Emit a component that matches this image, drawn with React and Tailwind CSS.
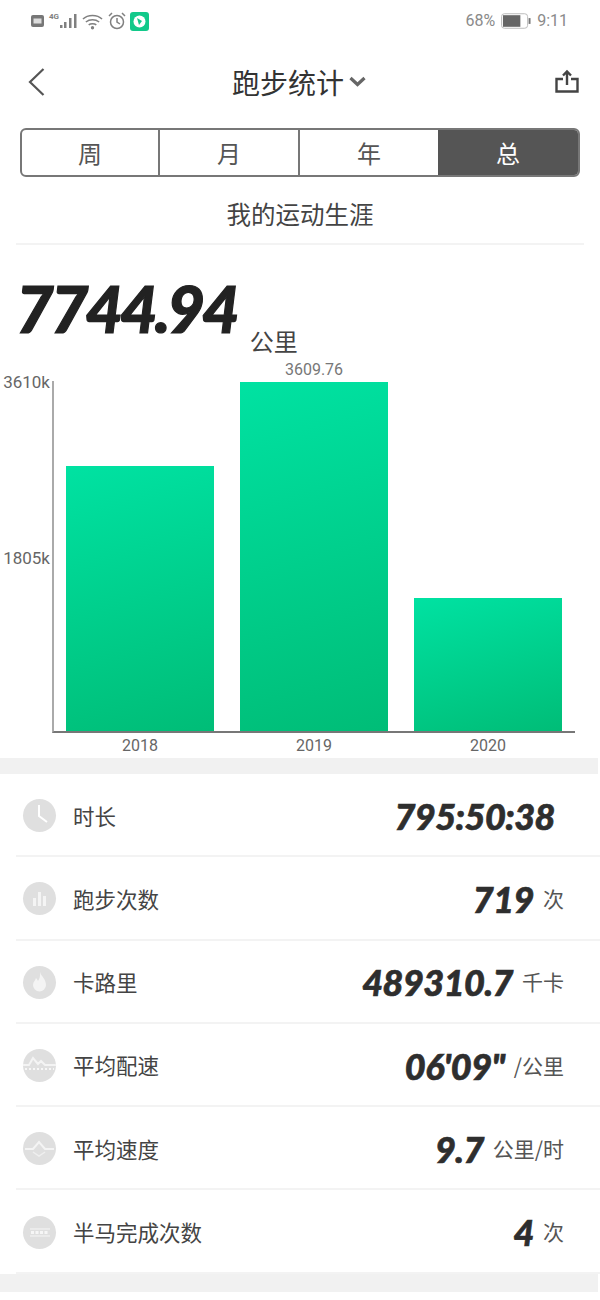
import React from 'react';

const CJK = '"Noto Sans CJK SC","Noto Sans",sans-serif';

const ClockIcon = () => (
  <svg width="33" height="33" viewBox="0 0 33 33" fill="none">
    <path d="M16 6v11l8 6" stroke="#fff" strokeWidth="2" />
  </svg>
);
const BarsIcon = () => (
  <svg width="33" height="33" viewBox="0 0 33 33" fill="#f4f4f4">
    <rect x="10" y="16" width="3" height="8" />
    <rect x="15" y="10" width="3" height="14" />
    <rect x="20" y="14" width="3" height="10" />
  </svg>
);
const FlameIcon = () => (
  <svg width="33" height="33" viewBox="0 0 33 33" fill="#f4f4f4">
    <path d="M17 6c1 4 6 7 6 13a6.500 6.500 0 0 1-13 0c0-3 2-4 3-7 1 1 1.500 2 2 3 1.500-2 2.500-5 2-9z" />
  </svg>
);
const PaceIcon = () => (
  <svg width="33" height="33" viewBox="0 0 33 33" fill="none">
    <path d="M0 16h6l4-7 5 6 3-3 4 4h11" stroke="#f4f4f4" strokeWidth="2" />
    <path d="M2 20h29" stroke="#fff" strokeWidth="1.500" strokeDasharray="2 2" />
  </svg>
);
const SpeedIcon = () => (
  <svg width="33" height="33" viewBox="0 0 33 33" fill="none">
    <path d="M2 17h8l6-7 6 7h9" stroke="#f4f4f4" strokeWidth="2" />
    <path d="M10 20l6 4 6-4" stroke="#efefef" strokeWidth="1.500" />
  </svg>
);
const HalfIcon = () => (
  <svg width="30" height="30" viewBox="0 0 30 30" fill="none">
    <path d="M5 12h20M5 19h20" stroke="#f6f6f6" strokeWidth="1" />
    <path d="M6 15.500h18" stroke="#f6f6f6" strokeWidth="3" strokeDasharray="3 1.500" />
  </svg>
);

const rows = [
  { label: '时长', value: '795:50:38', icon: <ClockIcon /> },
  { label: '跑步次数', value: '719', unit: '次', icon: <BarsIcon /> },
  { label: '卡路里', value: '489310.7', unit: '千卡', icon: <FlameIcon /> },
  { label: '平均配速', value: '06\'09"', unit: '/公里', icon: <PaceIcon /> },
  { label: '平均速度', value: '9.7', unit: '公里/时', icon: <SpeedIcon /> },
  { label: '半马完成次数', value: '4', unit: '次', icon: <HalfIcon /> },
];

const StatusBar = () => (
  <div className="h-[42px] flex items-center justify-between pl-[31px] pr-[32px] text-[#8a8a8a]">
    <div className="flex items-center">
      <svg width="13" height="12" viewBox="0 0 13 12"><rect x="0" y="0" width="13" height="12" rx="2" fill="#777" /><rect x="2.500" y="3.500" width="8" height="5" fill="#ddd" /></svg>
      <span className="ml-[5px] self-start text-[8px] leading-[10px] font-bold text-[#808080]" style={{ fontFamily: 'Roboto,sans-serif' }}>4G</span>
      <svg width="18" height="16" viewBox="0 0 18 16" fill="#808080">
        <rect x="1" y="12" width="2.500" height="3" />
        <rect x="5" y="9" width="2.500" height="6" />
        <rect x="10" y="5" width="2.500" height="10" />
        <rect x="15" y="1" width="2.500" height="14" />
      </svg>
      <svg className="ml-[5px]" width="21" height="17" viewBox="0 0 22 17" fill="none" stroke="#808080" strokeWidth="1.500">
        <path d="M1 6c5-5 15-5 20 0M4 9c4-3 10-3 14 0M7 12c2-1.500 6-1.500 8 0" />
        <circle cx="11" cy="15" r="1" fill="#808080" />
      </svg>
      <svg className="ml-[5px]" width="18" height="18" viewBox="0 0 18 18" fill="none" stroke="#808080" strokeWidth="1.500">
        <circle cx="9" cy="10" r="6.500" />
        <path d="M9 6v4l3 2M1 4l3-3M17 4l-3-3" />
      </svg>
      <svg className="ml-[4px]" width="19" height="19" viewBox="0 0 19 19">
        <rect width="19" height="19" rx="3" fill="#12c98a" />
        <circle cx="9.500" cy="9.500" r="6" fill="#fff" />
        <path d="M7 6l5 3-3 4z" fill="#12c98a" />
      </svg>
    </div>
    <div className="flex items-center gap-[6px] text-[16px]" style={{ fontFamily: 'Roboto,sans-serif' }}>
      <span>68%</span>
      <svg width="30" height="16" viewBox="0 0 31 16">
        <rect x="0.500" y="0.500" width="27" height="15" rx="3" fill="#fff" stroke="#bbb" />
        <rect x="2" y="2" width="18" height="12" fill="#666" />
        <rect x="28.500" y="5" width="2" height="6" fill="#777" />
      </svg>
      <span>9:11</span>
    </div>
  </div>
);

const Header = () => (
  <div className="h-[80px] flex items-center justify-between pl-[28px] pr-[20px] pb-[1px]">
    <svg width="18" height="30" viewBox="0 0 18 30" fill="none" stroke="#555" strokeWidth="2.200">
      <path d="M15.500 2L2 15l13.500 13" />
    </svg>
    <div className="flex items-center text-[28px] text-[#333] mr-[2px]">
      <span className="leading-none">跑步统计</span>
      <svg className="ml-[5px]" width="17" height="11" viewBox="0 0 17 11" fill="none" stroke="#666" strokeWidth="3.200">
        <path d="M1.500 2l7 6.500 7-6.500" />
      </svg>
    </div>
    <svg width="26" height="26" viewBox="0 0 26 26" fill="none" stroke="#444" strokeWidth="2.400">
      <path d="M9 10H2.500v12.500h21V10H17" />
      <path d="M13 16V3M9 6.500L13 2.500l4 4" />
    </svg>
  </div>
);

const Tabs = () => (
  <div className="mx-[20px] h-[49px] flex rounded-[6px] border-2 border-[#777] overflow-hidden text-[24px] text-[#555]">
    <div className="w-[138px] flex items-center justify-center border-r-2 border-[#777]">周</div>
    <div className="w-[140px] flex items-center justify-center border-r-2 border-[#777]">月</div>
    <div className="w-[138px] flex items-center justify-center">年</div>
    <div className="flex-1 flex items-center justify-center bg-[#555] text-white">总</div>
  </div>
);

const Bar = ({ year, height, label }) => (
  <div className="w-[148px] flex flex-col justify-end relative h-full">
    <div className="relative bg-[linear-gradient(165deg,#00e2a2,#00bd77)]" style={{ height }}>
      {label && (
        <span className="absolute left-0 right-0 -top-[22px] text-center text-[16px] leading-[20px] text-[#777]" style={{ fontFamily: 'Roboto,sans-serif' }}>
          {label}
        </span>
      )}
    </div>
    <span className="absolute left-0 right-0 -bottom-[25px] text-center text-[16px] leading-[20px] text-[#666]" style={{ fontFamily: 'Roboto,sans-serif' }}>
      {year}
    </span>
  </div>
);

const Chart = () => (
  <div className="flex h-[352px] mt-[8px]">
    <div className="w-[52px] pr-[2px] text-right text-[17px] leading-[20px] text-[#666] -mt-[9px]" style={{ fontFamily: 'Roboto,sans-serif' }}>
      <div className="h-[176px]">3610k</div>
      <div>1805k</div>
    </div>
    <div className="w-[523px] border-l-2 border-l-[#aaa] border-b-2 border-b-[#777] flex items-end gap-[26px] pl-[12px]">
      <Bar year="2018" height={265} />
      <Bar year="2019" height={349} label="3609.76" />
      <Bar year="2020" height={133} />
    </div>
  </div>
);

const StatRow = ({ label, value, unit, icon }) => (
  <div className="h-[83.300px] flex items-center pl-[23px] relative">
    <div className="w-[33px] h-[33px] rounded-full bg-[#dfdfdf] flex items-center justify-center overflow-hidden">{icon}</div>
    <span className="ml-[17px] text-[21.500px] text-[#444]">{label}</span>
    <div className={`ml-auto flex items-center ${unit ? 'pr-[36px]' : 'pr-[45px]'}`}>
      <span className="text-[36px] leading-none font-black italic tracking-[-0.5px] text-[#2e2e2e] [-webkit-text-stroke:0.7px_#2e2e2e]" style={{ fontFamily: 'Lato,sans-serif' }}>{value}</span>
      {unit && <span className="ml-[9px] text-[21px] text-[#555]">{unit}</span>}
    </div>
    <div className="absolute left-[16px] right-0 bottom-0 h-[2px] bg-[#f3f3f3]" />
  </div>
);

export default function App() {
  return (
    <div className="w-[600px] h-[1300px] bg-white overflow-hidden" style={{ fontFamily: CJK }}>
      <StatusBar />
      <Header />
      <div className="mt-[6px]">
        <Tabs />
      </div>
      <div className="mx-[16px] h-[68px] pt-[8px] flex items-center justify-center border-b-2 border-[#f3f3f3] text-[24.500px] text-[#444]">
        我的运动生涯
      </div>
      <div className="flex items-end pl-[16px] mt-[26px] h-[102px]">
        <span className="text-[65px] leading-[74px] font-black italic tracking-[-3px] text-[#222] self-start [-webkit-text-stroke:1.200px_#222]" style={{ fontFamily: 'Lato,sans-serif' }}>7744.94</span>
        <span className="ml-[13px] text-[24px] leading-[30px] text-[#444] mb-[17px]">公里</span>
      </div>
      <Chart />
      <div className="mt-[25px] h-[16px] bg-[#f1f1f1] mr-[2px]" />
      {rows.map((r) => (
        <StatRow key={r.label} {...r} />
      ))}
      <div className="h-[18px] bg-[#f1f1f1] mr-[2px]" />
    </div>
  );
}
